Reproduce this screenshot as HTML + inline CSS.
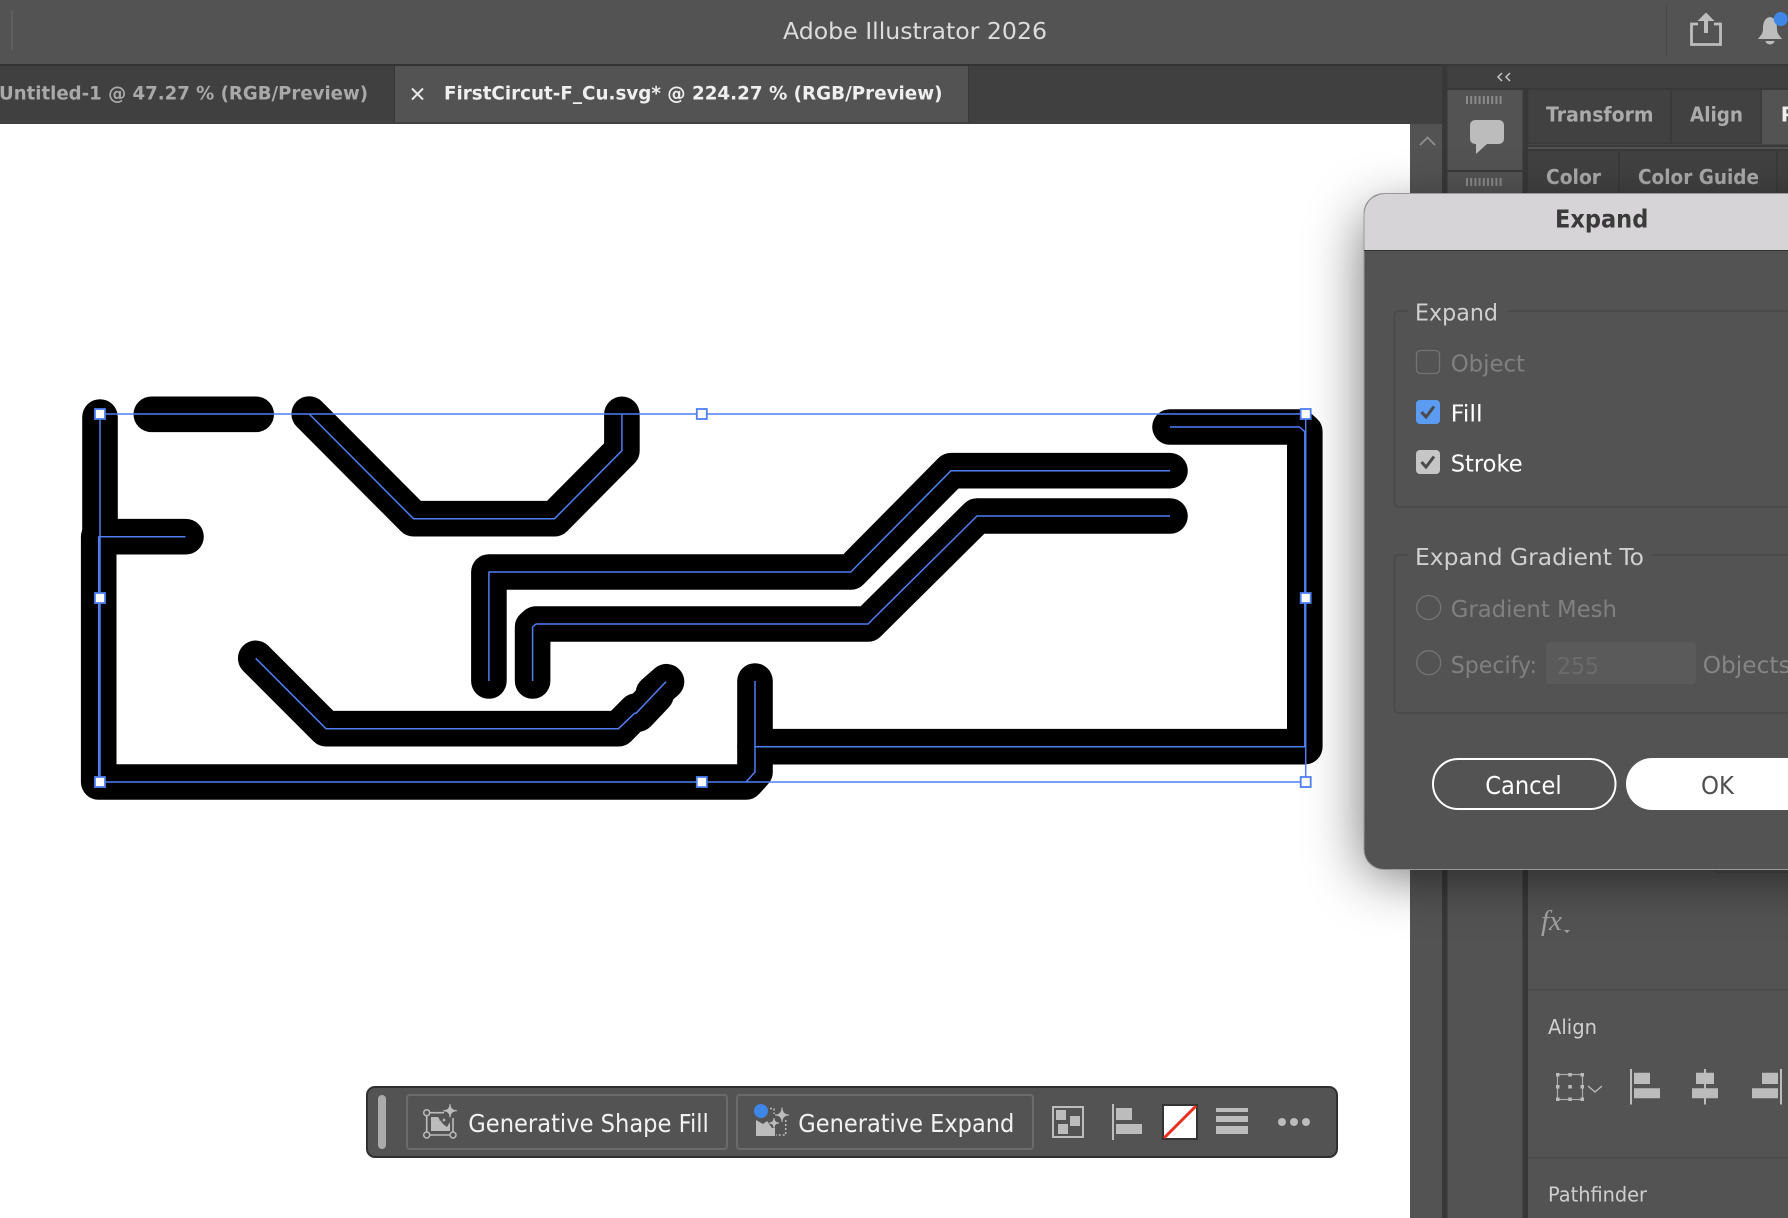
<!DOCTYPE html>
<html lang="en">
<head>
<meta charset="utf-8">
<title>Adobe Illustrator 2026</title>
<style>
html,body{margin:0;padding:0;width:1788px;height:1218px;overflow:hidden;background:#fff}
svg{display:block}
text{font-family:"DejaVu Sans","Liberation Sans",sans-serif;white-space:pre}
.b{font-weight:700}
</style>
</head>
<body>
<svg xmlns="http://www.w3.org/2000/svg" width="1788" height="1218" viewBox="0 0 1788 1218">
<defs>
<filter id="sh" filterUnits="userSpaceOnUse" x="1100" y="0" width="1000" height="1218" color-interpolation-filters="sRGB">
<feGaussianBlur stdDeviation="28"/>
</filter>
</defs>

<!-- canvas -->
<rect width="1788" height="1218" fill="#fff"/>

<!-- title bar -->
<rect width="1788" height="64" fill="#535353"/>
<rect x="11" y="10" width="2" height="40" fill="#5e5e5e"/>
<text x="783" y="39" font-size="23" fill="#dcdcdc" textLength="264" lengthAdjust="spacingAndGlyphs">Adobe Illustrator 2026</text>
<rect x="1666" y="4" width="1" height="51" fill="#484848"/>
<!-- share -->
<path d="M1698 24H1691.500V44.500H1720.500V24H1714" fill="none" stroke="#bdbdbd" stroke-width="2.800"/>
<path d="M1706 12.500L1714.500 21H1708V33H1704V21H1697.500Z" fill="#bdbdbd"/>
<!-- bell -->
<path d="M1770 17C1764 18 1763 24 1763 29C1763 34 1760 36 1758 39H1782C1780 36 1777 34 1777 29C1777 24 1776 18 1770 17Z" fill="#bdbdbd"/>
<path d="M1765.500 41H1774.500C1774 45.500 1766 45.500 1765.500 41Z" fill="#bdbdbd"/>
<circle cx="1780.700" cy="19" r="7" fill="#3f87e6"/>

<!-- tab strip -->
<rect y="64" width="1788" height="2" fill="#333"/>
<rect y="66" width="1442" height="58" fill="#404040"/>
<rect x="395" y="66" width="573" height="56" fill="#535353"/>
<rect x="394" y="66" width="1" height="56" fill="#383838"/>
<rect x="968" y="66" width="1" height="56" fill="#383838"/>
<text class="b" x="-1" y="99.300" font-size="19" fill="#a9a9a9" textLength="369" lengthAdjust="spacingAndGlyphs">Untitled-1 @ 47.27 % (RGB/Preview)</text>
<path d="M412 88.500L423 99.500M423 88.500L412 99.500" stroke="#e8e8e8" stroke-width="2"/>
<text class="b" x="444" y="99.300" font-size="19" fill="#efefef" textLength="498.500" lengthAdjust="spacingAndGlyphs">FirstCircut-F_Cu.svg* @ 224.27 % (RGB/Preview)</text>

<!-- doc scroller -->
<rect x="1410" y="124" width="32" height="1094" fill="#535353"/>
<path d="M1420 145L1427.500 137.500L1435 145" fill="none" stroke="#8f8f8f" stroke-width="1.800"/>

<!-- right panels base -->
<rect x="1442" y="64" width="346" height="1154" fill="#383838"/>
<rect x="1447.500" y="66" width="341" height="22" fill="#404040"/>
<path d="M1502 73L1498 77L1502 81M1510 73L1506 77L1510 81" fill="none" stroke="#c4c4c4" stroke-width="1.500"/>

<!-- dock col -->
<rect x="1447.500" y="90" width="75" height="80" fill="#535353"/>
<rect x="1447.500" y="172" width="75" height="1046" fill="#535353"/>
<g fill="#8a8a8a">
<path d="M1466 96h2v8h-2zM1470.200 96h2v8h-2zM1474.400 96h2v8h-2zM1478.600 96h2v8h-2zM1482.800 96h2v8h-2zM1487 96h2v8h-2zM1491.200 96h2v8h-2zM1495.400 96h2v8h-2zM1499.600 96h2v8h-2z"/>
<path d="M1466 178h2v8h-2zM1470.200 178h2v8h-2zM1474.400 178h2v8h-2zM1478.600 178h2v8h-2zM1482.800 178h2v8h-2zM1487 178h2v8h-2zM1491.200 178h2v8h-2zM1495.400 178h2v8h-2zM1499.600 178h2v8h-2z"/>
</g>
<path d="M1475 120H1499A5 5 0 0 1 1504 125V139A5 5 0 0 1 1499 144H1487L1476 154V144H1475A5 5 0 0 1 1470 139V125A5 5 0 0 1 1475 120Z" fill="#bcbcbc"/>

<!-- panel stack -->
<rect x="1528" y="89" width="260" height="1129" fill="#535353"/>
<rect x="1528" y="89" width="260" height="55" fill="#3a3a3a"/>
<rect x="1528.500" y="90" width="141.500" height="52.500" fill="#414141"/>
<rect x="1672" y="90" width="88.500" height="52.500" fill="#414141"/>
<rect x="1762" y="90" width="26" height="55" fill="#535353"/>
<rect x="1528" y="144.500" width="260" height="2.500" fill="#3a3a3a"/>
<rect x="1528" y="149" width="260" height="44" fill="#3a3a3a"/>
<rect x="1528" y="151" width="90" height="42" fill="#414141"/>
<rect x="1620" y="151" width="156" height="42" fill="#414141"/>
<rect x="1778" y="151" width="10" height="42" fill="#414141"/>
<text class="b" x="1546" y="121.700" font-size="20" fill="#ababab" textLength="107.500" lengthAdjust="spacingAndGlyphs">Transform</text>
<text class="b" x="1690" y="121.700" font-size="20" fill="#ababab" textLength="53" lengthAdjust="spacingAndGlyphs">Align</text>
<text class="b" x="1780.700" y="121.700" font-size="20" fill="#efefef">P</text>
<text class="b" x="1546" y="184" font-size="20" fill="#ababab" textLength="55" lengthAdjust="spacingAndGlyphs">Color</text>
<text class="b" x="1638" y="184" font-size="20" fill="#ababab" textLength="121" lengthAdjust="spacingAndGlyphs">Color Guide</text>

<!-- lower panel content -->
<rect x="1528" y="989" width="260" height="1.500" fill="#494949"/>
<rect x="1528" y="1157" width="260" height="1.500" fill="#494949"/>
<text x="1541" y="930" font-size="29" fill="#a3a3a3" style="font-family:'Liberation Serif',serif;font-style:italic">fx</text>
<path d="M1564 930H1570L1567 933Z" fill="#a3a3a3"/>
<text x="1548" y="1034" font-size="20" fill="#cfcfcf" textLength="49" lengthAdjust="spacingAndGlyphs">Align</text>
<text x="1548" y="1201.700" font-size="20" fill="#cfcfcf" textLength="99" lengthAdjust="spacingAndGlyphs">Pathfinder</text>
<!-- align icons -->
<rect x="1557.500" y="1074.500" width="25" height="25" fill="none" stroke="#aaa" stroke-width="1.200"/>
<g fill="#bcbcbc">
<path d="M1556 1073h3.500v3.500h-3.500zM1568.300 1073h3.500v3.500h-3.500zM1580.500 1073h3.500v3.500h-3.500zM1556 1085h3.500v3.500h-3.500zM1568.300 1085h3.500v3.500h-3.500zM1580.500 1085h3.500v3.500h-3.500zM1556 1097.500h3.500v3.500h-3.500zM1568.300 1097.500h3.500v3.500h-3.500zM1580.500 1097.500h3.500v3.500h-3.500z"/>
<path d="M1630 1069h2v35.500h-2zM1634 1072.700h16v11.300h-16zM1634 1088.300h26v10h-26z"/>
<path d="M1704 1069h2v35.500h-2zM1696 1072.700h18v11.300h-18zM1692 1088.300h26v10h-26z"/>
<path d="M1780 1069h2v35.500h-2zM1762 1072.700h16v11.300h-16zM1752 1088.300h26v10h-26z"/>
</g>
<path d="M1588 1086L1595 1092L1602 1086" fill="none" stroke="#bcbcbc" stroke-width="1.300"/>
<rect x="1715" y="860" width="90" height="12" rx="3" fill="none" stroke="#494949" stroke-width="1.500"/>

<!-- artwork -->
<g fill="none" stroke="#000" stroke-width="35.600" stroke-linecap="round" stroke-linejoin="round">
<path d="M151.300 414.300H256.200"/>
<path d="M100 417V537"/>
<path d="M186 536.700H98.700V782H746L755 772V681"/>
<path d="M309.200 414L413.500 518.700H554.500L621.900 450.700V414.300"/>
<path d="M488.900 681V572H850.800L951 470.700H1170"/>
<path d="M532.600 681V627L536 624H868L977 516H1170"/>
<path d="M255.700 658.300L326 728.700H618.500L636 711"/>
<path d="M638 714L656 695"/>
<path d="M653.500 693L666.500 681.700"/>
<path d="M1170 427H1299.600L1304.800 431.700V746.700H755"/>
</g>
<g fill="none" stroke="#4f7ff2" stroke-width="1.500" stroke-linejoin="round">
<path d="M185.400 536.700H98.700V782"/>
<path d="M309.200 414L413.500 518.700H554.500L621.900 450.700V414.300"/>
<path d="M488.900 681V572H850.800L951 470.700H1170"/>
<path d="M532.600 681V627L536 624H868L977 516H1170"/>
<path d="M255.700 658.300L326 728.700H618.500L634.500 713.300H636L654.300 694L655.500 692.700L666 681.700"/>
<path d="M1170 427H1299.600L1304.800 431.700V746.700H755V772L746 782"/>
<path d="M755 681V746.700"/>
<rect x="100" y="414" width="1205.700" height="368"/>
</g>
<g fill="#fff" stroke="#4f7ff2" stroke-width="1.800">
<rect x="95" y="409" width="10" height="10"/>
<rect x="696.800" y="409" width="10" height="10"/>
<rect x="1300.700" y="409" width="10" height="10"/>
<rect x="95" y="593" width="10" height="10"/>
<rect x="1300.700" y="593" width="10" height="10"/>
<rect x="95" y="777" width="10" height="10"/>
<rect x="696.800" y="777" width="10" height="10"/>
<rect x="1300.700" y="777" width="10" height="10"/>
</g>

<!-- bottom toolbar -->
<rect x="367" y="1087" width="970" height="70" rx="8" fill="#535353" stroke="#2f2f2f" stroke-width="2"/>
<rect x="378" y="1095" width="8" height="54" rx="4" fill="#ababab"/>
<rect x="407" y="1095" width="320" height="54" rx="3" fill="none" stroke="#6b6b6b" stroke-width="2"/>
<rect x="737" y="1095" width="296" height="54" rx="3" fill="none" stroke="#6b6b6b" stroke-width="2"/>
<text x="468.300" y="1132" font-size="24.500" fill="#f2f2f2" textLength="240.500" lengthAdjust="spacingAndGlyphs">Generative Shape Fill</text>
<text x="798.300" y="1132" font-size="24.500" fill="#f2f2f2" textLength="216" lengthAdjust="spacingAndGlyphs">Generative Expand</text>

<!-- gen shape fill icon -->
<path d="M426.700 1112.700H444M426.700 1112.700V1135H453V1118" fill="none" stroke="#bcbcbc" stroke-width="1.600"/>
<g fill="#535353" stroke="#bcbcbc" stroke-width="1.500">
<circle cx="426.700" cy="1112.700" r="3"/><circle cx="426.700" cy="1135" r="3"/><circle cx="453" cy="1135" r="3"/>
</g>
<path d="M431 1117H438L443 1124L447 1127L450 1122V1131H431Z" fill="#bcbcbc"/>
<path d="M450 1104Q450 1110.700 457 1110.700Q450 1110.700 450 1117.500Q450 1110.700 443 1110.700Q450 1110.700 450 1104Z" fill="#bcbcbc" stroke="#bcbcbc" stroke-width="1"/>
<path d="M444 1115.500Q444 1120 448.500 1120Q444 1120 444 1124.500Q444 1120 439.500 1120Q444 1120 444 1115.500Z" fill="#bcbcbc" stroke="#535353" stroke-width="1"/>

<!-- gen expand icon -->
<path d="M756 1136V1120L763 1124L767 1121L772 1128L775 1128V1136Z" fill="#bcbcbc"/>
<circle cx="761" cy="1111" r="7" fill="#3f87e6"/>
<path d="M770 1108.500H774V1114M785.700 1120V1135H776" fill="none" stroke="#bcbcbc" stroke-width="1.500" stroke-dasharray="2 2"/>
<path d="M782 1107.500Q782 1115 789 1115Q782 1115 782 1122Q782 1115 775 1115Q782 1115 782 1107.500Z" fill="#bcbcbc" stroke="#bcbcbc"/>
<path d="M774 1118Q774 1123 779 1123Q774 1123 774 1128Q774 1123 769 1123Q774 1123 774 1118Z" fill="#bcbcbc" stroke="#bcbcbc"/>

<!-- toolbar right icons -->
<rect x="1053" y="1107" width="30" height="30" fill="none" stroke="#bcbcbc" stroke-width="2"/>
<g fill="#bcbcbc">
<rect x="1056" y="1110" width="10" height="10"/><rect x="1070" y="1116" width="10" height="10"/><rect x="1058" y="1124" width="10" height="10"/>
<rect x="1112" y="1104" width="2" height="36"/><rect x="1116" y="1108" width="16" height="12"/><rect x="1116" y="1124" width="26" height="10"/>
<rect x="1216" y="1108" width="32" height="4"/><rect x="1216" y="1116" width="32" height="6"/><rect x="1216" y="1126" width="32" height="8"/>
<circle cx="1282" cy="1122" r="4"/><circle cx="1294" cy="1122" r="4"/><circle cx="1306" cy="1122" r="4"/>
</g>
<rect x="1163" y="1105" width="34" height="34" fill="#fff" stroke="#333" stroke-width="2"/>
<path d="M1164 1138L1196 1106" stroke="#e8301c" stroke-width="3"/>

<!-- dialog shadow -->
<rect x="1364" y="213" width="500" height="662" rx="20" fill="#000" fill-opacity=".56" filter="url(#sh)"/>

<!-- dialog -->
<rect x="1364" y="193.500" width="500" height="676" rx="20" fill="#535353" stroke="#9a9a9a" stroke-width="1"/>
<path d="M1364.500 250V213.500A20 20 0 0 1 1384.500 194H1800V250Z" fill="#d6d4d6"/>
<rect x="1364" y="250" width="424" height="1" fill="#333"/>
<text class="b" x="1555" y="227.300" font-size="24.500" fill="#3a3a3a" textLength="93.300" lengthAdjust="spacingAndGlyphs">Expand</text>

<path d="M1408 311H1398A4 4 0 0 0 1394.500 315V503A4 4 0 0 0 1398 507H1800M1508 311H1800" fill="none" stroke="#484848" stroke-width="1.500"/>
<text x="1415" y="320.700" font-size="23.500" fill="#d0d0d0" textLength="83" lengthAdjust="spacingAndGlyphs">Expand</text>

<rect x="1416.500" y="350.500" width="23" height="23" rx="4" fill="none" stroke="#737373" stroke-width="1.300"/>
<text x="1450.700" y="371.700" font-size="23.500" fill="#808080" textLength="74.300" lengthAdjust="spacingAndGlyphs">Object</text>

<rect x="1416" y="400" width="24" height="24" rx="4" fill="#5b9cf2"/>
<path d="M1421.500 412L1426 417L1434 406.500" fill="none" stroke="#4a4a4a" stroke-width="3"/>
<text x="1450.700" y="421.700" font-size="23.500" fill="#fff" textLength="32" lengthAdjust="spacingAndGlyphs">Fill</text>

<rect x="1416" y="450" width="24" height="24" rx="4" fill="#c6c6c6"/>
<path d="M1421.500 462L1426 467L1434 456.500" fill="none" stroke="#4a4a4a" stroke-width="3"/>
<text x="1450.700" y="471.700" font-size="23.500" fill="#fff" textLength="72" lengthAdjust="spacingAndGlyphs">Stroke</text>

<path d="M1408 555H1398A4 4 0 0 0 1394.500 559V709A4 4 0 0 0 1398 713H1800M1652 555H1800" fill="none" stroke="#484848" stroke-width="1.500"/>
<text x="1415" y="565" font-size="23.500" fill="#d0d0d0" textLength="229" lengthAdjust="spacingAndGlyphs">Expand Gradient To</text>

<circle cx="1428.700" cy="607.500" r="12" fill="none" stroke="#747474" stroke-width="1.300"/>
<text x="1450.700" y="617" font-size="23.500" fill="#808080" textLength="166.300" lengthAdjust="spacingAndGlyphs">Gradient Mesh</text>

<circle cx="1428.700" cy="662.700" r="12" fill="none" stroke="#747474" stroke-width="1.300"/>
<text x="1450.700" y="673" font-size="23.500" fill="#808080" textLength="86.300" lengthAdjust="spacingAndGlyphs">Specify:</text>
<rect x="1546" y="642" width="150" height="42" rx="4" fill="#5a5a5a"/>
<text x="1557" y="674" font-size="23.500" fill="#6b6b6b" textLength="42" lengthAdjust="spacingAndGlyphs">255</text>
<text x="1702.700" y="673" font-size="23.500" fill="#858585" textLength="88" lengthAdjust="spacingAndGlyphs">Objects</text>

<rect x="1433" y="759" width="182.500" height="50" rx="25" fill="none" stroke="#fff" stroke-width="2"/>
<text x="1485.300" y="794" font-size="24.500" fill="#fff" textLength="76.400" lengthAdjust="spacingAndGlyphs">Cancel</text>
<rect x="1626" y="758" width="260" height="52" rx="26" fill="#fff"/>
<text x="1701" y="794" font-size="24.500" fill="#505050" textLength="33" lengthAdjust="spacingAndGlyphs">OK</text>
</svg>
</body>
</html>
